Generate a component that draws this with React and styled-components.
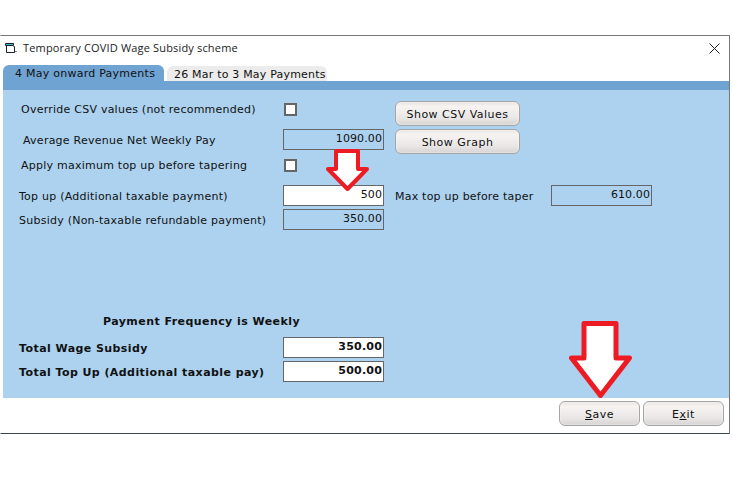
import React from 'react'
import styled, { createGlobalStyle } from 'styled-components'

const GlobalStyle = createGlobalStyle`
  html, body {
    margin: 0;
    padding: 0;
    background: #fff;
  }
  body {
    font-family: "DejaVu Sans", Verdana, sans-serif;
    font-size: 11px;
    color: #111;
  }
`

const Page = styled.div`
  position: relative;
  width: 732px;
  height: 495px;
  padding-top: 35px;
  box-sizing: border-box;
  overflow: hidden;
`
const Window = styled.div`
  width: 730px;
  height: 399px;
  box-sizing: border-box;
  border-top: 1px solid #777;
  border-right: 1px solid #777;
  border-bottom: 1px solid #3c4a50;
  border-left: 1px solid transparent;
  display: flex;
  flex-direction: column;
`
const TitleBar = styled.div`
  height: 24px;
  display: flex;
  align-items: center;
  padding: 0 4px 0 3px;
  font-family: "Open Sans", "Noto Sans", sans-serif;
  font-size: 11px;
  color: #222;
`
const TitleText = styled.span`
  margin: 0 0 2px 6px;
  flex: 1;
  letter-spacing: 0.17px;
`
const TabStrip = styled.div`
  height: 16px;
  margin: 5px 0 0 2px;
  display: flex;
  align-items: flex-end;
  gap: 3px;
`
const Tab = styled.div`
  height: ${props => (props.$active ? '16px' : '15px')};
  width: ${props => (props.$active ? '161px' : '160px')};
  padding: 1px 0 0 ${props => (props.$active ? '12px' : '7px')};
  box-sizing: border-box;
  display: flex;
  align-items: center;
  white-space: nowrap;
  background: ${props => (props.$active ? '#6fa3d2' : '#ececec')};
  border-radius: 6px 6px 0 0;
  letter-spacing: ${props => (props.$active ? '0.25px' : '0.2px')};
`
const TabBand = styled.div`
  height: 9px;
  margin: 0 0 0 2px;
  background: #6fa3d2;
`
const Panel = styled.div`
  height: 308px;
  margin-left: 2px;
  padding: 9px 0 16px;
  box-sizing: border-box;
  background: #acd2ef;
  display: flex;
  flex-direction: column;
`
const TopBlock = styled.div`
  display: flex;
`
const FieldColumn = styled.div`
  width: 381px;
`
const ButtonColumn = styled.div`
  margin-left: 11px;
  padding-top: 2px;
  display: flex;
  flex-direction: column;
  gap: 3px;
`
const Row = styled.div`
  height: 21px;
  margin-top: ${props => props.$top || 0}px;
  display: flex;
  align-items: center;
`
const Label = styled.div`
  width: ${props => 280 - (props.$indent || 16)}px;
  margin-left: ${props => props.$indent || 16}px;
  padding-top: ${props => (props.$drop ? 2 : 0)}px;
  white-space: nowrap;
  letter-spacing: ${props => (props.$bold ? '0.43px' : '0.24px')};
  font-weight: ${props => (props.$bold ? 700 : 400)};
`
const Check = styled.div`
  width: 13px;
  height: 13px;
  margin-left: 1px;
  box-sizing: border-box;
  background: #fff;
  border: 2px solid #666;
`
const Field = styled.div`
  width: 101px;
  height: 21px;
  box-sizing: border-box;
  padding: 0 1px 3px 0;
  background: ${props => (props.$white ? '#fff' : 'transparent')};
  border: 1px solid #666;
  display: flex;
  align-items: center;
  justify-content: flex-end;
  letter-spacing: ${props => (props.$bold ? '0.2px' : '0.1px')};
  font-weight: ${props => (props.$bold ? 700 : 400)};
`
const SideLabel = styled.div`
  width: 156px;
  margin-left: 11px;
  padding-top: 2px;
  letter-spacing: 0.22px;
  white-space: nowrap;
`
const PillButton = styled.button`
  width: ${props => props.$width || 125}px;
  height: 25px;
  padding: 1px 0 0;
  box-sizing: border-box;
  font: inherit;
  color: #111;
  letter-spacing: 0.48px;
  border: 1px solid #a5a5a5;
  border-radius: 6px;
  background: linear-gradient(#e8e4e2 0%, #f6f3f1 20%, #e9e7e6 70%, #d6d3d1 100%);
  box-shadow: inset 0 0 2px #fff;
`
const Frequency = styled.div`
  margin: auto 0 9px 100px;
  font-weight: 700;
  letter-spacing: 0.44px;
`
const Footer = styled.div`
  flex: 1;
  display: flex;
  justify-content: flex-end;
  gap: 3px;
  padding: 3px 5px 0 0;
`
const Close = styled.svg`
  width: 11px;
  height: 11px;
  margin-right: 5px;
`
const Overlay = styled.svg`
  position: absolute;
  left: ${props => props.$x}px;
  top: ${props => props.$y}px;
`

const WindowIcon = () => (
  <svg width="13" height="13" viewBox="0 0 13 13" fill="none" stroke="#1a232b" strokeWidth="1">
    <path d="M1.5 1.5H9.5V3.5H1.5Z" fill="#3db7d6" />
    <path d="M2.5 3.5V10.5H10.5V4.5H9.5" />
    <path d="M11 9.5H13" stroke="#8a8a8a" />
  </svg>
)

const Arrow = ({ x, y, width, height, shaftLeft, shaftRight, shaftEnd, stroke }) => (
  <Overlay $x={x} $y={y} width={width} height={height} viewBox={`0 0 ${width} ${height}`}>
    <path
      d={`M${shaftLeft} ${stroke / 2}H${shaftRight}V${shaftEnd}H${width - stroke / 2}L${width / 2} ${height - stroke / 2}L${stroke / 2} ${shaftEnd}H${shaftLeft}Z`}
      fill="#fff"
      stroke="#ed1c24"
      strokeWidth={stroke}
      strokeLinejoin="round"
    />
  </Overlay>
)

const App = () => {
  return (
    <Page>
      <GlobalStyle />
      <Window>
        <TitleBar>
          <WindowIcon />
          <TitleText>Temporary COVID Wage Subsidy scheme</TitleText>
          <Close viewBox="0 0 11 11">
            <path d="M0.5 0.5l10 10M10.5 0.5l-10 10" stroke="#222" strokeWidth="1" fill="none" />
          </Close>
        </TitleBar>
        <TabStrip>
          <Tab $active>4 May onward Payments</Tab>
          <Tab>26 Mar to 3 May Payments</Tab>
        </TabStrip>
        <TabBand />
        <Panel>
          <TopBlock>
            <FieldColumn>
              <Row>
                <Label $indent={18}>Override CSV values (not recommended)</Label>
                <Check />
              </Row>
              <Row $top={9}>
                <Label $indent={20} $drop>Average Revenue Net Weekly Pay</Label>
                <Field>1090.00</Field>
              </Row>
              <Row $top={5}>
                <Label $indent={18}>Apply maximum top up before tapering</Label>
                <Check />
              </Row>
            </FieldColumn>
            <ButtonColumn>
              <PillButton>Show CSV Values</PillButton>
              <PillButton>Show Graph</PillButton>
            </ButtonColumn>
          </TopBlock>
          <Row $top={9}>
            <Label $drop>Top up (Additional taxable payment)</Label>
            <Field $white>500</Field>
            <SideLabel>Max top up before taper</SideLabel>
            <Field>610.00</Field>
          </Row>
          <Row $top={3}>
            <Label $drop>Subsidy (Non-taxable refundable payment)</Label>
            <Field>350.00</Field>
          </Row>
          <Frequency>Payment Frequency is Weekly</Frequency>
          <Row>
            <Label $bold $drop>Total Wage Subsidy</Label>
            <Field $white $bold>350.00</Field>
          </Row>
          <Row $top={3}>
            <Label $bold $drop>Total Top Up (Additional taxable pay)</Label>
            <Field $white $bold>500.00</Field>
          </Row>
        </Panel>
        <Footer>
          <PillButton $width={81}><u>S</u>ave</PillButton>
          <PillButton $width={81}>E<u>x</u>it</PillButton>
        </Footer>
      </Window>
      <Arrow x={326} y={149} width={43} height={42} shaftLeft={10} shaftRight={32} shaftEnd={20} stroke={4} />
      <Arrow x={569} y={321} width={63} height={77} shaftLeft={15} shaftRight={47} shaftEnd={37} stroke={5} />
    </Page>
  )
}

export default App
